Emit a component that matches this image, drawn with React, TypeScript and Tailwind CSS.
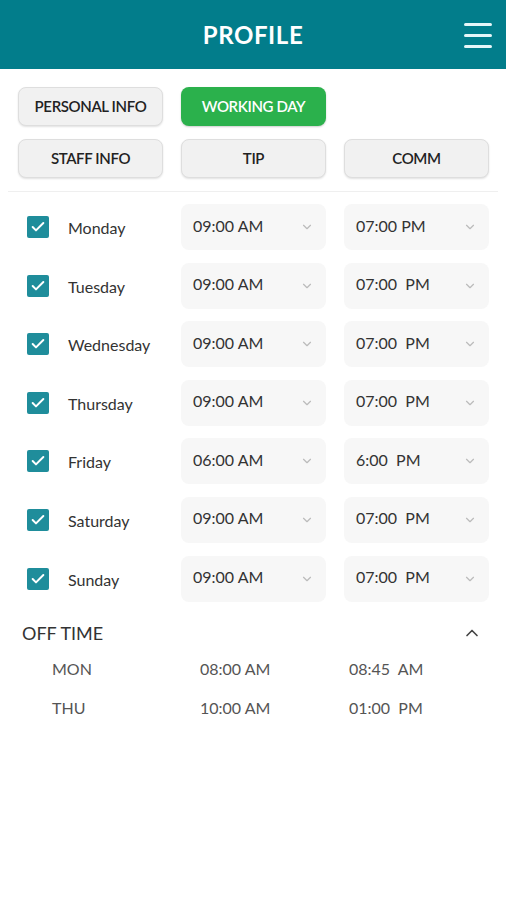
import { Check, ChevronDown, ChevronUp } from 'lucide-react';

const days = [
  { name: 'Monday', start: '09:00 AM', end: '07:00 PM' },
  { name: 'Tuesday', start: '09:00 AM', end: '07:00  PM' },
  { name: 'Wednesday', start: '09:00 AM', end: '07:00  PM' },
  { name: 'Thursday', start: '09:00 AM', end: '07:00  PM' },
  { name: 'Friday', start: '06:00 AM', end: '6:00  PM' },
  { name: 'Saturday', start: '09:00 AM', end: '07:00  PM' },
  { name: 'Sunday', start: '09:00 AM', end: '07:00  PM' },
];

const offTimes = [
  { day: 'MON', start: '08:00 AM', end: '08:45  AM' },
  { day: 'THU', start: '10:00 AM', end: '01:00  PM' },
];

function TabButton({ label, active }: { label: string; active?: boolean }) {
  return (
    <button
      className={
        active
          ? 'h-[39px] rounded-lg bg-[#2bb14c] text-[15px] font-semibold tracking-tight text-white shadow-[0_1px_2px_rgba(0,0,0,0.2)]'
          : 'h-[39px] rounded-lg border border-[#dedede] bg-[#f1f1f1] text-[15px] font-semibold tracking-tight text-[#222] shadow-[0_1px_2px_rgba(0,0,0,0.12)]'
      }
    >
      {label}
    </button>
  );
}

function TimeSelect({ value }: { value: string }) {
  return (
    <div className="flex h-[46px] items-center justify-between rounded-lg bg-[#f7f7f7] pl-3 pr-3">
      <span className="mb-[3px] whitespace-pre text-[16px] text-[#333]">{value}</span>
      <ChevronDown className="h-3.5 w-3.5 text-[#bbb]" strokeWidth={2} />
    </div>
  );
}

export default function App() {
  return (
    <div className="min-h-[900px] bg-white font-['Lato','Liberation_Sans',sans-serif]">
      <header className="relative flex h-[69px] items-center justify-center bg-[#027d8b]">
        <h1 className="text-[24px] font-bold tracking-wide text-white">PROFILE</h1>
        <div className="absolute right-[14px] top-[23px] flex w-[28px] flex-col gap-[8px]">
          <span className="h-[3px] rounded-full bg-[#e6f6f8]" />
          <span className="h-[3px] rounded-full bg-[#e6f6f8]" />
          <span className="h-[3px] rounded-full bg-[#e6f6f8]" />
        </div>
      </header>

      <div className="grid grid-cols-3 gap-x-[18px] gap-y-[13px] pl-[18px] pr-[17px] pt-[18px]">
        <TabButton label="PERSONAL INFO" />
        <TabButton label="WORKING DAY" active />
        <div />
        <TabButton label="STAFF INFO" />
        <TabButton label="TIP" />
        <TabButton label="COMM" />
      </div>

      <div className="mx-[8px] mt-[13px] h-px bg-[#efefef]" />

      <div className="mt-[12px] flex flex-col gap-[12.6px] pl-[27px] pr-[17px]">
        {days.map((d) => (
          <div key={d.name} className="flex items-center">
            <div className="flex h-[22px] w-[22px] items-center justify-center rounded-[2px] bg-[#1f8d9b]">
              <Check className="h-4 w-4 text-white" strokeWidth={3} />
            </div>
            <span className="ml-[19px] mt-[2px] w-[113px] text-[16px] text-[#333]">{d.name}</span>
            <div className="grid flex-1 grid-cols-2 gap-[18px]">
              <TimeSelect value={d.start} />
              <TimeSelect value={d.end} />
            </div>
          </div>
        ))}
      </div>

      <div className="mt-[18px] flex items-center justify-between pl-[22px] pr-[24px]">
        <span className="text-[18px] text-[#333]">OFF TIME</span>
        <ChevronUp className="h-5 w-5 text-[#444]" strokeWidth={2} />
      </div>

      <div className="mt-[10px] flex flex-col gap-[15px] pl-[52px]">
        {offTimes.map((o) => (
          <div key={o.day} className="flex text-[16px] text-[#555]">
            <span className="w-[148px]">{o.day}</span>
            <span className="w-[149px]">{o.start}</span>
            <span className="whitespace-pre">{o.end}</span>
          </div>
        ))}
      </div>
    </div>
  );
}
